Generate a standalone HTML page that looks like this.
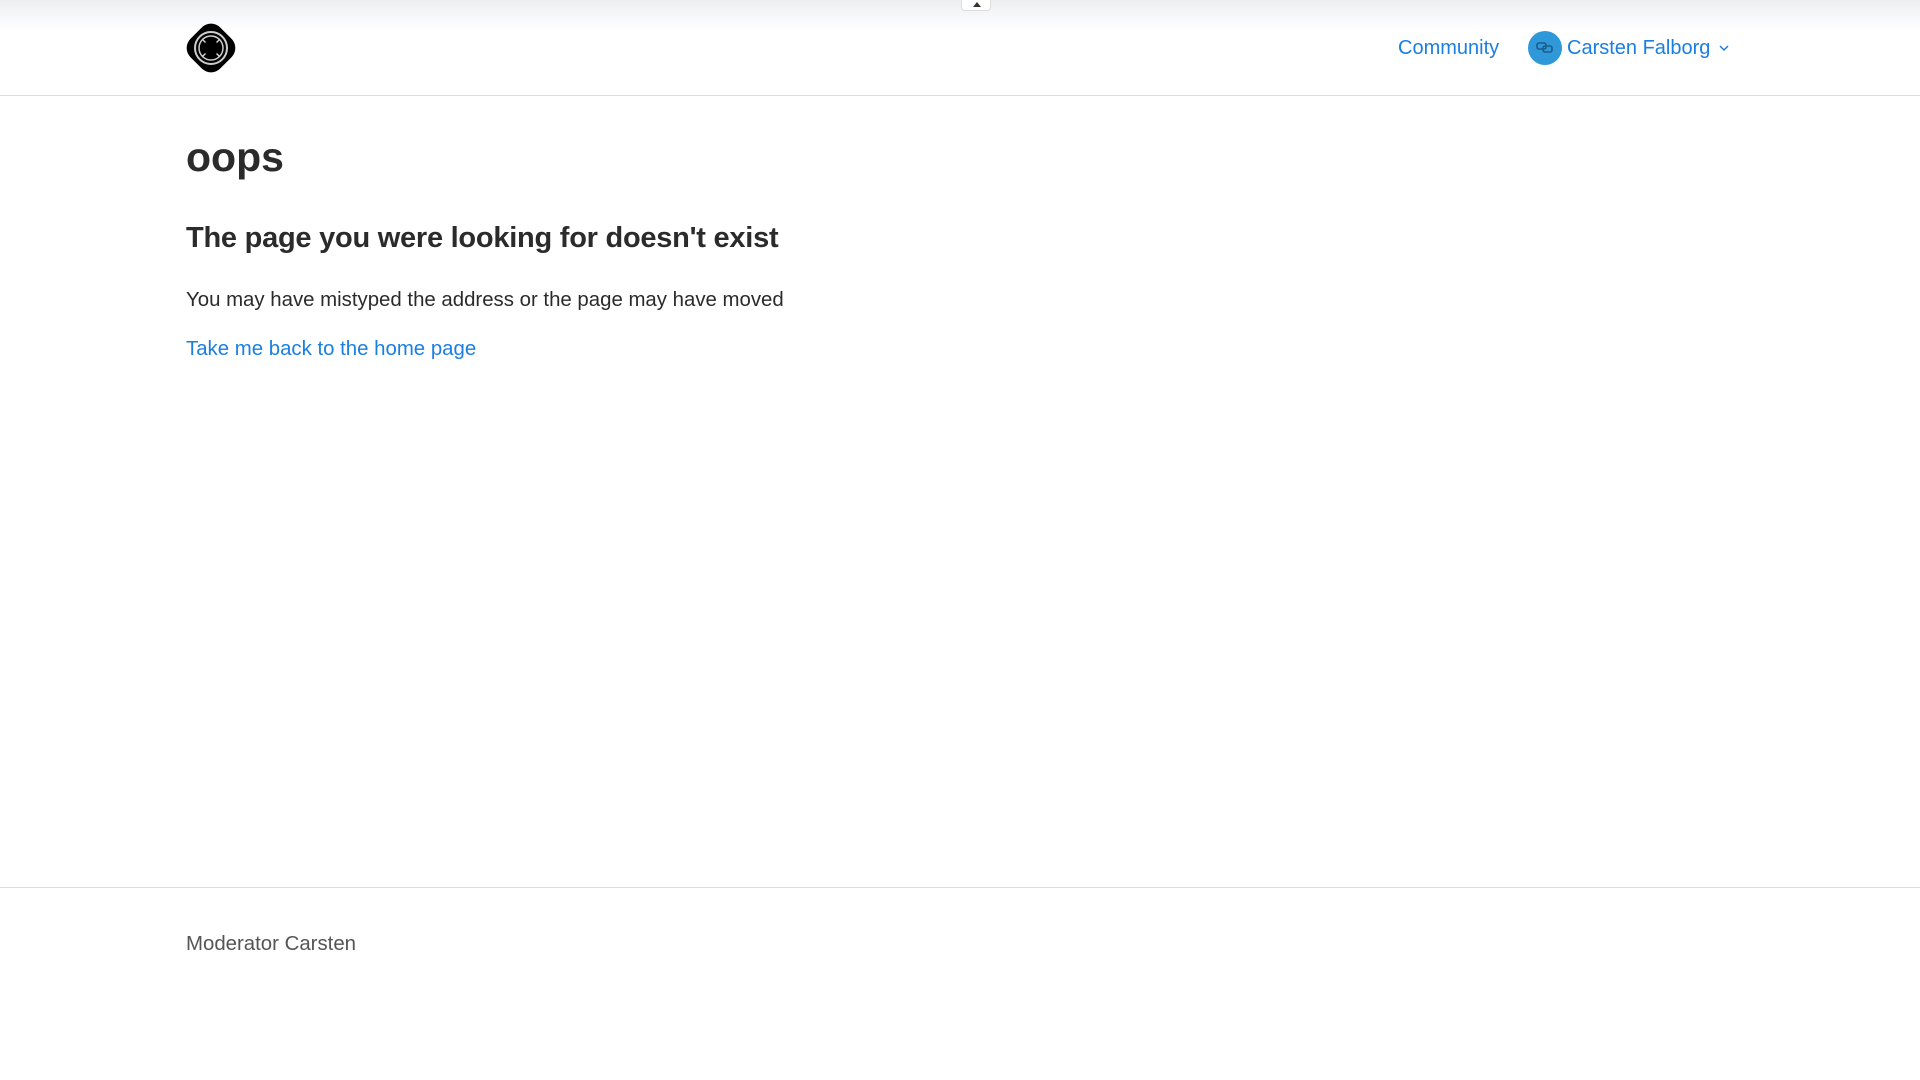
<!DOCTYPE html>
<html><head><meta charset="utf-8"><style>
*{margin:0;padding:0;box-sizing:border-box}
body{width:1920px;height:1080px;background:#fff;font-family:"Liberation Sans",sans-serif;color:#2b2b2b;position:relative;overflow:hidden}
.top{position:absolute;left:0;top:0;width:1920px;height:30px;background:linear-gradient(#eceef1,#fff)}
.tab{position:absolute;left:961px;top:-2px;width:30px;height:13px;background:#fff;border:1px solid #ddd;border-radius:0 0 4px 4px}
.tab:after{content:"";position:absolute;left:11px;top:3px;border-left:4px solid transparent;border-right:4px solid transparent;border-bottom:5px solid #333}
.hdr{position:absolute;left:0;top:95px;width:1920px;border-top:1px solid #ddd}
.nav{position:absolute;top:37px;font-size:20px;color:#1a7fe0}
h1{position:absolute;left:186px;top:134px;font-size:41px;font-weight:bold;color:#2b2b2b}
h2{position:absolute;left:186px;top:222px;font-size:29px;font-weight:bold;color:#2b2b2b;letter-spacing:-0.25px}
p{position:absolute;left:186px;font-size:20.4px}
.ft{position:absolute;left:0;top:887px;width:1920px;border-top:1px solid #ddd}
</style></head><body>
<div class="top"></div><div class="tab"></div>
<svg style="position:absolute;left:185px;top:22px" width="52" height="52" viewBox="0 0 52 52">
<rect x="5" y="5" width="42" height="42" rx="13" transform="rotate(45 26 26)" fill="#000"/>
<circle cx="26" cy="26" r="16" fill="none" stroke="#ccc" stroke-width="2"/>
<circle cx="26" cy="26" r="12" fill="none" stroke="#ccc" stroke-width="1.5"/>
<circle cx="26" cy="26" r="9" fill="#000"/>
<g stroke="#ccc" stroke-width="1.5"><line x1="17" y1="17" x2="20.5" y2="20.5"/><line x1="35" y1="17" x2="31.5" y2="20.5"/><line x1="17" y1="35" x2="20.5" y2="31.5"/><line x1="35" y1="35" x2="31.5" y2="31.5"/></g>
</svg>
<div class="nav" style="left:1398px">Community</div>
<svg style="position:absolute;left:1528px;top:31px" width="34" height="34" viewBox="0 0 34 34"><circle cx="17" cy="17" r="17" fill="#2f98d8"/><g fill="none" stroke="#1d5c8a" stroke-width="1.6"><rect x="9" y="12" width="9" height="6" rx="2"/><rect x="15" y="15" width="9" height="6" rx="2"/></g></svg>
<div class="nav" style="left:1567px">Carsten Falborg</div>
<svg style="position:absolute;left:1719px;top:44px" width="10" height="8"><path d="M1 2l4 4 4-4" fill="none" stroke="#1a7fe0" stroke-width="1.5"/></svg>
<div class="hdr"></div>
<h1>oops</h1>
<h2>The page you were looking for doesn't exist</h2>
<p style="top:289px">You may have mistyped the address or the page may have moved</p>
<p style="top:338px;color:#1a7fe0">Take me back to the home page</p>
<div class="ft"></div>
<p style="top:933px;color:#555">Moderator Carsten</p>
</body></html>
